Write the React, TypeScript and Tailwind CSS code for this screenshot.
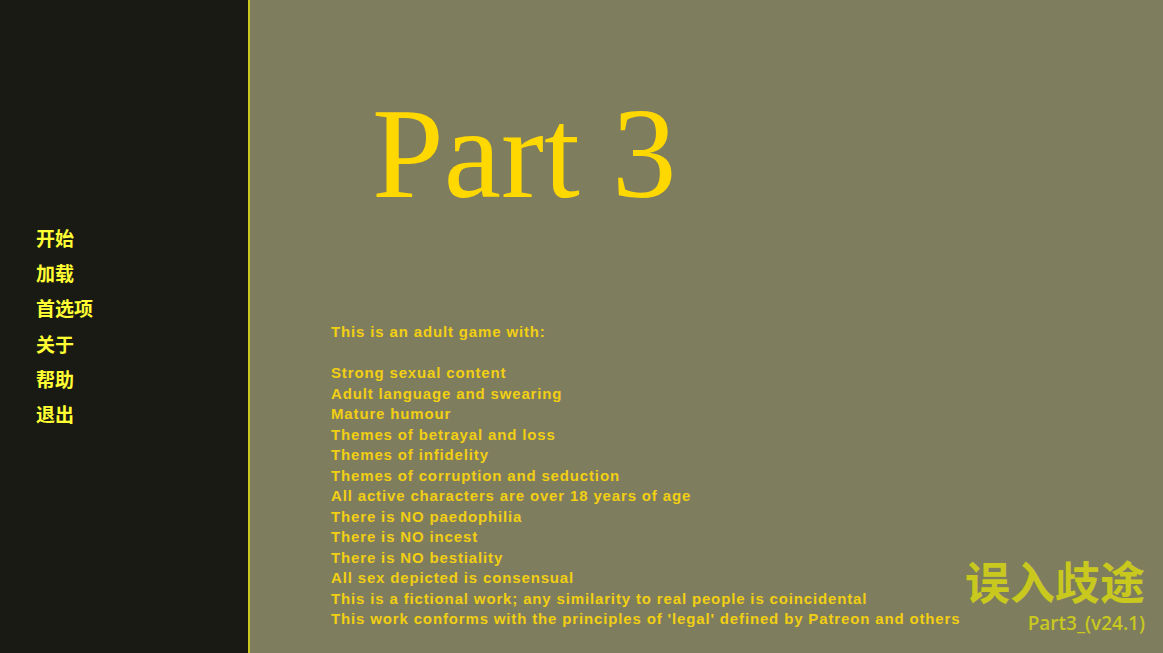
import React from "react";

const menu = ["开始", "加载", "首选项", "关于", "帮助", "退出"];
const lines = [
  "Strong sexual content",
  "Adult language and swearing",
  "Mature humour",
  "Themes of betrayal and loss",
  "Themes of infidelity",
  "Themes of corruption and seduction",
  "All active characters are over 18 years of age",
  "There is NO paedophilia",
  "There is NO incest",
  "There is NO bestiality",
  "All sex depicted is consensual",
  "This is a fictional work; any similarity to real people is coincidental",
  "This work conforms with the principles of 'legal' defined by Patreon and others",
];

export default function App() {
  return (
    <div className="flex w-[1163px] h-[653px] overflow-hidden bg-[#7e7d5e]">
      <div className="w-[250px] shrink-0 bg-[#1a1a14] border-r-2 border-[#c8c81e] flex flex-col pt-[220px] pl-[36px]">
        {menu.map((m) => (
          <div
            key={m}
            className="h-[35.2px] flex items-center text-[19px] font-bold text-[#ffff33] leading-none"
            style={{ fontFamily: '"Noto Sans CJK SC", sans-serif' }}
          >
            {m}
          </div>
        ))}
      </div>
      <div className="relative flex-1 flex flex-col">
        <div className="h-[300px] pl-[122px] pt-[89px]">
          <div
            className="text-[129px] leading-none text-[#ffd800] whitespace-nowrap"
            style={{ fontFamily: '"Liberation Serif", serif' }}
          >
            Part 3
          </div>
        </div>
        <div
          className="pl-[81px] pt-[22px] text-[15px] font-bold text-[#f2cf13] leading-[20.5px] tracking-[0.85px] whitespace-nowrap"
          style={{ fontFamily: '"Liberation Sans", Arial, sans-serif' }}
        >
          <div>This is an adult game with:</div>
          <div className="h-[20.5px]" />
          {lines.map((l) => (
            <div key={l}>{l}</div>
          ))}
        </div>
        <div className="absolute right-[18px] bottom-[20px] flex flex-col items-end text-[#c8c81e]">
          <div
            className="text-[45px] font-bold leading-none"
            style={{ fontFamily: '"Noto Sans CJK SC", sans-serif' }}
          >
            误入歧途
          </div>
          <div
            className="text-[19px] font-semibold leading-none mt-[11px]"
            style={{ fontFamily: '"Open Sans", sans-serif' }}
          >
            Part3_(v24.1)
          </div>
        </div>
      </div>
    </div>
  );
}
